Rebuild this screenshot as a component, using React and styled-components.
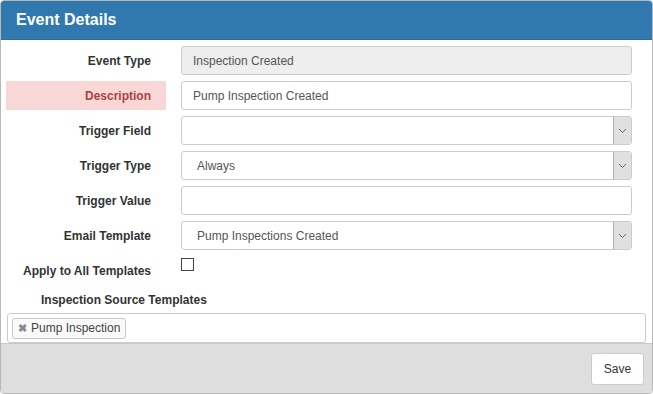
import React from 'react';
import styled, { createGlobalStyle } from 'styled-components';

const GlobalStyle = createGlobalStyle`
  html, body {
    margin: 0;
    padding: 0;
    background: #fff;
    font-family: "Liberation Sans", Arial, sans-serif;
    color: #333;
  }
`;

const Panel = styled.div`
  width: 651px;
  height: 392px;
  border: 1px solid #b8b8b8;
  border-radius: 4px;
  overflow: hidden;
  display: flex;
  flex-direction: column;
  background: #fff;
`;

const Header = styled.div`
  height: 38px;
  flex: none;
  background: #3178ae;
  color: #fff;
  font-size: 16px;
  font-weight: bold;
  padding: 0 15px;
  display: flex;
  align-items: center;
  border-bottom: 1px solid #2d6c9c;
`;

const Body = styled.div`
  flex: 1;
  min-height: 0;
  padding: 6px 5px 0 5px;
  display: flex;
  flex-direction: column;
`;

const Row = styled.div`
  display: grid;
  grid-template-columns: 160px 1fr;
  column-gap: 15px;
  margin-bottom: 6px;
  padding-right: 15px;
`;

const Label = styled.div`
  height: 29px;
  display: flex;
  align-items: ${p => (p.$top ? 'flex-start' : 'center')};
  justify-content: flex-end;
  padding-right: 15px;
  padding-top: ${p => (p.$top ? '8px' : '0')};
  font-size: 12px;
  font-weight: bold;
  color: ${p => (p.$error ? '#a94442' : '#333')};
  background: ${p => (p.$error ? '#f9d7d7' : 'transparent')};
  box-sizing: border-box;
`;

const Input = styled.div`
  height: 29px;
  box-sizing: border-box;
  border: 1px solid #ccc;
  border-radius: 3px;
  background: ${p => (p.$disabled ? '#eee' : '#fff')};
  display: flex;
  align-items: center;
  padding-left: ${p => (p.$select ? '15px' : '11px')};
  font-size: 12px;
  color: #555;
  position: relative;
  overflow: hidden;
`;

const Caret = styled.div`
  position: absolute;
  right: 0;
  top: 0;
  bottom: 0;
  width: 17px;
  background: #e0e0e0;
  border-left: 1px solid #b0b0b0;
  display: flex;
  align-items: center;
  justify-content: center;
`;

const Checkbox = styled.div`
  width: 11px;
  height: 11px;
  border: 1px solid #444;
  background: #fff;
  margin-top: 2px;
`;

const SectionTitle = styled.div`
  font-size: 12px;
  font-weight: bold;
  color: #333;
  padding-left: 35px;
  margin-top: -1px;
  height: 20px;
  display: flex;
  align-items: center;
`;

const MultiSelect = styled.div`
  margin: 4px 0 0 1px;
  width: 639px;
  height: 30px;
  flex: none;
  box-sizing: border-box;
  border: 1px solid #ccc;
  border-radius: 3px;
  display: flex;
  align-items: center;
  padding-left: 4px;
`;

const Tag = styled.div`
  height: 21px;
  box-sizing: border-box;
  border: 1px solid #c8c8c8;
  border-radius: 3px;
  background: #fafafa;
  display: flex;
  align-items: center;
  padding: 0 5px;
  font-size: 12px;
  color: #444;
  gap: 4px;
`;

const TagX = styled.span`
  color: #888;
  font-size: 11px;
  font-weight: bold;
`;

const Footer = styled.div`
  height: 50px;
  flex: none;
  background: #dedede;
  border-top: 1px solid #c8c8c8;
  display: flex;
  justify-content: flex-end;
  align-items: flex-start;
  padding: 9px 8px 0 0;
  box-sizing: border-box;
`;

const Button = styled.button`
  width: 53px;
  height: 32px;
  background: #fff;
  border: 1px solid #ccc;
  border-radius: 3px;
  font-family: "Liberation Sans", Arial, sans-serif;
  font-size: 12px;
  color: #333;
  padding: 0;
`;

const Chevron = () => (
  <svg width="9" height="6" viewBox="0 0 9 6">
    <path d="M1 1 L4.5 4.5 L8 1" fill="none" stroke="#666" strokeWidth="1" />
  </svg>
);

const fields = [
  { label: 'Event Type', value: 'Inspection Created', disabled: true },
  { label: 'Description', value: 'Pump Inspection Created', error: true },
  { label: 'Trigger Field', value: '', select: true },
  { label: 'Trigger Type', value: 'Always', select: true },
  { label: 'Trigger Value', value: '' },
  { label: 'Email Template', value: 'Pump Inspections Created', select: true },
];

export default function App() {
  return (
    <>
      <GlobalStyle />
      <Panel>
        <Header>Event Details</Header>
        <Body>
          {fields.map(f => (
            <Row key={f.label}>
              <Label $error={f.error}>{f.label}</Label>
              <Input $disabled={f.disabled} $select={f.select}>
                {f.value}
                {f.select && (
                  <Caret>
                    <Chevron />
                  </Caret>
                )}
              </Input>
            </Row>
          ))}
          <Row>
            <Label $top>Apply to All Templates</Label>
            <div>
              <Checkbox />
            </div>
          </Row>
          <SectionTitle>Inspection Source Templates</SectionTitle>
          <MultiSelect>
            <Tag>
              <TagX>✖</TagX>
              Pump Inspection
            </Tag>
          </MultiSelect>
        </Body>
        <Footer>
          <Button>Save</Button>
        </Footer>
      </Panel>
    </>
  );
}
